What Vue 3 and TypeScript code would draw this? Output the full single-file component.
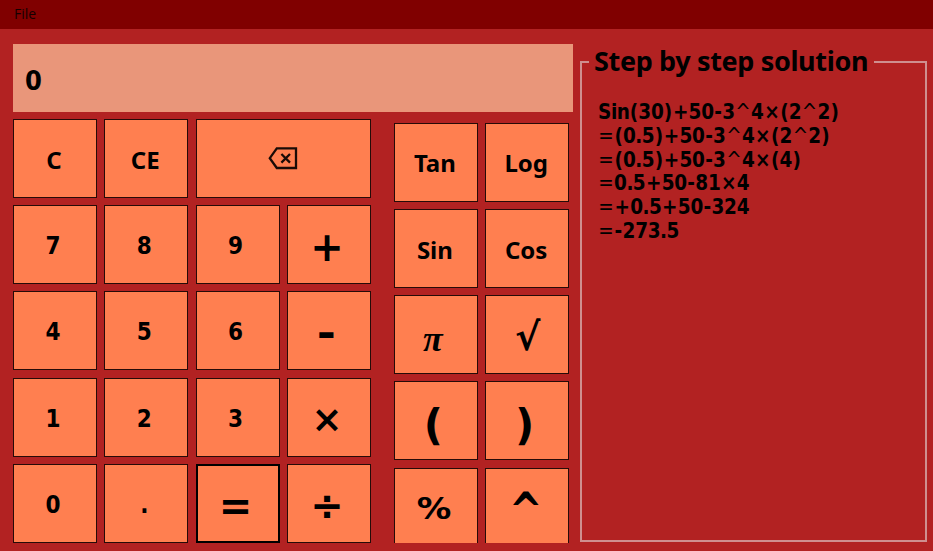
<script setup lang="ts">
interface Key {
  label: string
  kind?: string
}

const mainKeys: Key[] = [
  { label: 'C', kind: 'word' }, { label: 'CE', kind: 'word' }, { label: '', kind: 'back' },
  { label: '7' }, { label: '8' }, { label: '9' }, { label: '+', kind: 'op plus' },
  { label: '4' }, { label: '5' }, { label: '6' }, { label: '-', kind: 'op minus' },
  { label: '1' }, { label: '2' }, { label: '3' }, { label: '×', kind: 'op times' },
  { label: '0' }, { label: '.' }, { label: '=', kind: 'op equals' }, { label: '÷', kind: 'op divide' },
]

const scienceKeys: Key[] = [
  { label: 'Tan', kind: 'word' }, { label: 'Log', kind: 'word' },
  { label: 'Sin', kind: 'word' }, { label: 'Cos', kind: 'word' },
  { label: 'π', kind: 'pi' }, { label: '√', kind: 'op root' },
  { label: '(', kind: 'op bracket' }, { label: ')', kind: 'op bracket' },
  { label: '%', kind: 'op percent' }, { label: '^', kind: 'op power' },
]

const steps: string[] = [
  'Sin(30)+50-3^4×(2^2)',
  '=(0.5)+50-3^4×(2^2)',
  '=(0.5)+50-3^4×(4)',
  '=0.5+50-81×4',
  '=+0.5+50-324',
  '=-273.5',
]

function charClass(c: string): string {
  if (c === '=' || c === '^') return 'sym thin'
  if ('+×'.includes(c)) return 'sym'
  if ('()'.includes(c)) return 'paren'
  if (c === '-') return 'dash'
  if (c === '.') return 'dot'
  if (c >= '0' && c <= '9') return 'digit'
  return 'letter'
}
</script>

<template>
  <div class="window">
    <nav class="menu"><span>File</span></nav>
    <main class="content">
      <section class="calculator">
        <div class="display"><span>0</span></div>
        <div class="pads">
          <div class="pad main-pad">
            <button v-for="(k, i) in mainKeys" :key="i" class="key" :class="k.kind">
              <svg v-if="k.kind === 'back'" width="30" height="24" viewBox="0 0 30 24">
                <path d="M8.8 1.4H28V21H8.8L1.8 11.2Z" />
                <path d="M13.4 7L22 15.6M22 7L13.4 15.6" />
              </svg>
              <span v-else>{{ k.label }}</span>
            </button>
          </div>
          <div class="pad science-pad">
            <button v-for="k in scienceKeys" :key="k.label" class="key" :class="k.kind">
              <span>{{ k.label }}</span>
            </button>
          </div>
        </div>
      </section>
      <fieldset class="solution">
        <legend><span>Step by step solution</span></legend>
        <div class="steps">
          <div v-for="s in steps" :key="s" class="step"><span v-for="(c, i) in s" :key="i" :class="charClass(c)">{{ c }}</span></div>
        </div>
      </fieldset>
    </main>
  </div>
</template>

<style>
body {
  background: #b22222;
  overflow: hidden;
}
</style>

<style scoped>
.window {
  box-sizing: border-box;
  width: 933px;
  height: 551px;
  overflow: hidden;
  background: #b22222;
  color: #000;
  font-family: "DejaVu Sans Condensed", "DejaVu Sans", sans-serif;
  font-stretch: condensed;
}
.menu {
  display: flex;
  box-sizing: border-box;
  height: 29px;
  padding: 5px 14px;
  background: #800000;
  color: #140000;
  font: 14px/17px "Open Sans", "Noto Sans", sans-serif;
}
.content {
  display: flex;
  padding: 15px 0 0 13px;
}
.calculator {
  width: 560px;
  flex: none;
}
.display {
  display: flex;
  align-items: center;
  box-sizing: border-box;
  height: 67.5px;
  padding: 5px 0 0 12px;
  background: #e9967a;
  font-size: 27px;
  font-weight: bold;
}
.pads {
  display: flex;
  align-items: flex-start;
  gap: 23px;
  height: 431.5px;
  overflow: hidden;
}
.pad {
  display: grid;
  grid-auto-rows: 79px;
  gap: 7.2px 7.3px;
}
.main-pad {
  grid-template-columns: repeat(4, 84px);
  padding-top: 7.5px;
}
.science-pad {
  grid-template-columns: repeat(2, 84px);
  padding-top: 11.4px;
}
.key {
  display: flex;
  align-items: center;
  justify-content: center;
  min-width: 0;
  padding: 3px 4px 0 0;
  border: 1px solid #260b08;
  border-radius: 0;
  background: #ff7f50;
  color: #000;
  font-family: inherit;
  font-stretch: condensed;
  font-size: 24px;
  font-weight: bold;
  line-height: 1;
}
.key span {
  display: block;
}
.word {
  padding: 2px 2px 0 0;
  font-family: "Noto Sans", sans-serif;
  font-stretch: normal;
}
.back {
  grid-column: span 2;
  padding: 0;
}
.back svg {
  fill: none;
  stroke: #1a0b06;
  stroke-width: 2.3;
}
.op {
  padding: 3px 4px 0 0;
  font-family: "DejaVu Sans", sans-serif;
  font-stretch: normal;
  font-size: 40px;
}
.plus {
  padding-top: 5px;
}
.minus {
  padding: 4px 6px 0 0;
}
.minus span {
  transform: scaleX(1.15);
}
.times {
  font-size: 37px;
  padding-top: 5px;
}
.equals {
  padding: 5px 4px 0 0;
  border: 2px solid #000;
}
.divide {
  padding-top: 6px;
}
.root {
  padding: 4px 0 0 1px;
  font-size: 38px;
}
.bracket {
  padding: 10px 5px 0 0;
  font-size: 42px;
}
.percent {
  padding-top: 3px;
  font-size: 30px;
}
.percent span {
  transform: scaleX(1.15);
}
.power {
  padding: 6px 3px 0 0;
}
.power span {
  transform: scaleY(1.25);
}
.pi {
  padding: 8px 6px 0 0;
  font-family: "Liberation Serif", serif;
  font-style: italic;
  font-size: 36px;
}
.solution {
  box-sizing: border-box;
  width: 347px;
  height: 498px;
  margin: 0 0 0 7px;
  padding: 0 0 0 16px;
  border: 2px solid #cf8f8f;
  min-width: 0;
}
.solution legend {
  box-sizing: border-box;
  width: 285px;
  height: 36px;
  margin-left: -9px;
  padding: 0 0 0 5px;
  font-family: "Noto Sans", sans-serif;
  font-stretch: normal;
  font-size: 27px;
  letter-spacing: -0.35px;
  line-height: 33px;
  font-weight: bold;
  white-space: nowrap;
}
.steps {
  padding-top: 21px;
  font-size: 20.5px;
  font-weight: bold;
}
.step {
  display: flex;
  height: 23.8px;
  line-height: 23.8px;
}
.step span {
  display: flex;
  justify-content: center;
}
.step .letter {
  letter-spacing: -0.4px;
}
.step .digit {
  width: 12.6px;
}
.step .sym {
  width: 16.2px;
}
.step .thin {
  font-weight: normal;
}
.step .paren {
  width: 8.9px;
}
.step .dash {
  width: 8.5px;
}
.step .dot {
  width: 6.2px;
}
</style>
